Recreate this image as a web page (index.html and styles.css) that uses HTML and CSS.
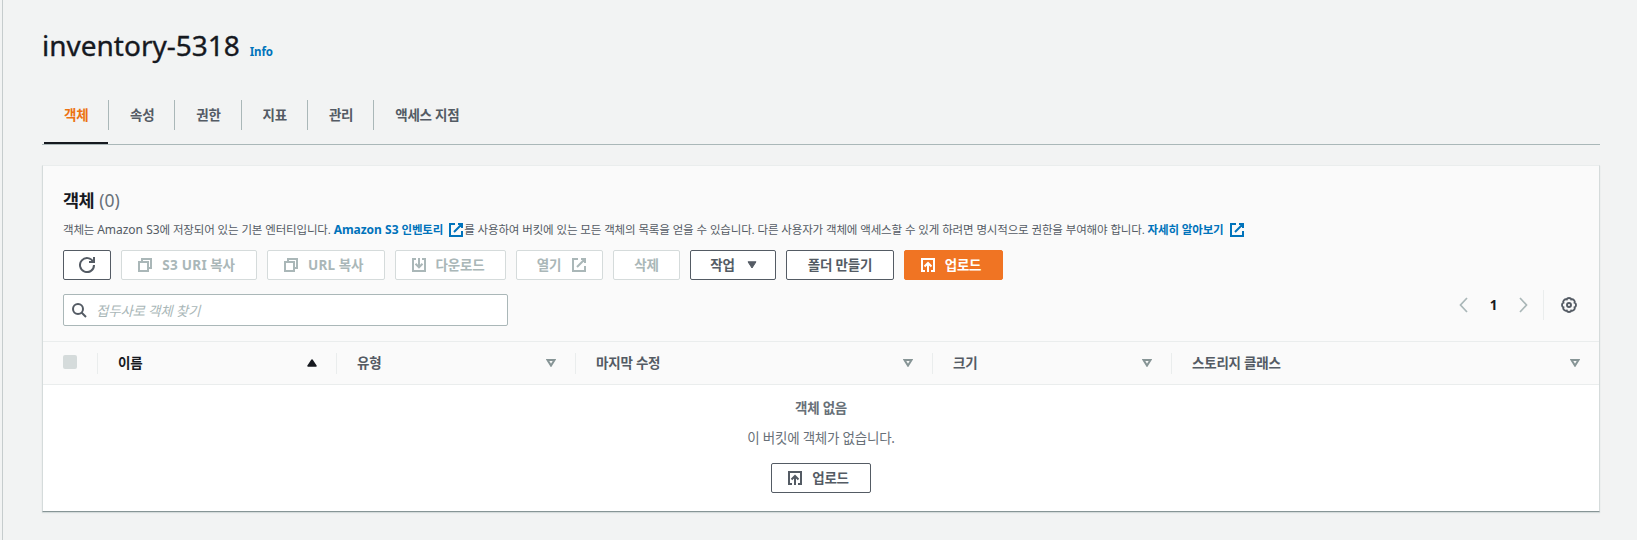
FILE: index.html
```html
<!DOCTYPE html>
<html lang="ko">
<head>
<meta charset="utf-8">
<title>inventory-5318</title>
<link rel="stylesheet" href="styles.css">
</head>
<body>
<svg class="defs" aria-hidden="true">
  <symbol id="copy" viewBox="0 0 16 16"><path d="M2 5h9v9H2zM5 5V2h9v9h-3"/></symbol>
  <symbol id="download" viewBox="0 0 16 16"><path d="M5 2H2v12h12V2h-3M8 1v9M4.5 6.8 8 10.3l3.5-3.5"/></symbol>
  <symbol id="upload" viewBox="0 0 16 16"><path d="M5 14H2V2h12v12h-3M8 15V6M4.5 9.5 8 6l3.5 3.5"/></symbol>
  <symbol id="external" viewBox="0 0 16 16"><path d="M10 2h4v4M6 10l8-8M14 9v5H2V2h5"/></symbol>
  <symbol id="sort" viewBox="0 0 10 8"><path d="M1.5 1h7L5 6.6z"/></symbol>
</svg>
<main class="page">
  <header class="heading"><h1>inventory-5318</h1><a class="info">Info</a></header>
  <nav class="tabs">
    <a class="tab active"><span>객체</span></a><a class="tab"><span>속성</span></a><a class="tab"><span>권한</span></a><a class="tab"><span>지표</span></a><a class="tab"><span>관리</span></a><a class="tab"><span>액세스 지점</span></a>
  </nav>
  <section class="panel">
    <div class="panel-head">
      <h2>객체 <span class="count">(0)</span></h2>
      <p class="desc">객체는 <span class="latin">Amazon S3</span>에 저장되어 있는 기본 엔터티입니다. <a><span class="latin">Amazon S3</span> 인벤토리 <svg class="icon"><use href="#external"/></svg></a>를 사용하여 버킷에 있는 모든 객체의 목록을 얻을 수 있습니다. 다른 사용자가 객체에 액세스할 수 있게 하려면 명시적으로 권한을 부여해야 합니다. <a class="more">자세히 알아보기 <svg class="icon"><use href="#external"/></svg></a></p>
      <div class="actions">
        <button class="btn refresh"><svg class="icon" viewBox="0 0 16 16"><path d="M10 5h5V0M15 8a7 7 0 1 1-.7-3"/></svg></button>
        <button class="btn off leading w-uri"><svg class="icon"><use href="#copy"/></svg><span><span class="latin">S3 URI</span> 복사</span></button>
        <button class="btn off leading w-url"><svg class="icon"><use href="#copy"/></svg><span><span class="latin">URL</span> 복사</span></button>
        <button class="btn off leading w-down"><svg class="icon"><use href="#download"/></svg><span>다운로드</span></button>
        <button class="btn off w-open trailing"><span>열기</span><svg class="icon"><use href="#external"/></svg></button>
        <button class="btn off w-del"><span>삭제</span></button>
        <button class="btn w-act"><span>작업</span><svg class="caret" viewBox="0 0 10 8"><path d="M1 .8h8L5 7z"/></svg></button>
        <button class="btn w-folder"><span>폴더 만들기</span></button>
        <button class="btn leading primary"><svg class="icon"><use href="#upload"/></svg><span>업로드</span></button>
      </div>
      <div class="tools">
        <div class="search"><svg class="icon" viewBox="0 0 16 16"><circle cx="7" cy="7" r="5"/><path d="m15 15-4.5-4.5"/></svg><span>접두사로 객체 찾기</span></div>
        <div class="pager">
          <svg class="arrow" viewBox="0 0 9 16"><path d="M8 1 1.5 8 8 15"/></svg>
          <b>1</b>
          <svg class="arrow" viewBox="0 0 9 16"><path d="m1 1 6.5 7L1 15"/></svg>
          <i class="rule"></i>
          <svg class="gear" viewBox="0 0 16 16"><path d="M5.7 2.4Q6.2 1 8 1T10.3 2.4Q11.7 1.8 12.95 3.05T13.6 5.7Q15 6.2 15 8T13.6 10.3Q14.2 11.7 12.95 12.95T10.3 13.6Q9.8 15 8 15T5.7 13.6Q4.3 14.2 3.05 12.95T2.4 10.3Q1 9.8 1 8T2.4 5.7Q1.8 4.3 3.05 3.05T5.7 2.4z"/><circle cx="8" cy="8" r="2"/></svg>
        </div>
      </div>
    </div>
    <div class="columns">
      <div class="check"><i></i></div>
      <div class="col sorted"><span>이름</span><svg class="sort" viewBox="0 0 10 8"><path d="M1 7h8L5 1z"/></svg></div>
      <div class="col"><span>유형</span><svg class="sort"><use href="#sort"/></svg></div>
      <div class="col"><span>마지막 수정</span><svg class="sort"><use href="#sort"/></svg></div>
      <div class="col"><span>크기</span><svg class="sort"><use href="#sort"/></svg></div>
      <div class="col"><span>스토리지 클래스</span><svg class="sort"><use href="#sort"/></svg></div>
    </div>
    <div class="empty">
      <b>객체 없음</b>
      <p>이 버킷에 객체가 없습니다.</p>
      <button class="btn leading w-upload"><svg class="icon"><use href="#upload"/></svg><span>업로드</span></button>
    </div>
  </section>
</main>
</body>
</html>
```
FILE: styles.css
```css
* { box-sizing: border-box; }
body {
  margin: 0;
  height: 540px;
  overflow: hidden;
  background: #f2f3f3;
  color: #545b64;
  font: 13.5px/20px "Noto Sans", "Noto Sans CJK KR", sans-serif;
  letter-spacing: -0.22px;
  white-space: nowrap;
}
h1, h2, p { margin: 0; }
svg { display: block; fill: none; stroke: currentColor; stroke-width: 2; flex: none; }
.defs { position: absolute; width: 0; height: 0; }
.icon { width: 16px; height: 16px; }
.latin { letter-spacing: 0; }
.page { height: 540px; margin-left: 2px; padding: 25px 37px 0 39px; border-left: 1px solid #c6cccd; }
.heading { display: flex; align-items: baseline; gap: 10px; height: 75px; }
h1 { color: #16191f; font-size: 28px; line-height: 40px; font-weight: 400; letter-spacing: 0; -webkit-text-stroke: 0.35px; }
.info { color: #0073bb; font-size: 11.5px; font-weight: 700; letter-spacing: -0.2px; }

.tabs { display: flex; height: 45px; padding-left: 2px; border-bottom: 1px solid #aab7b8; font-weight: 700; }
.tab { height: 44px; width: 66.3px; }
.tab span { display: block; height: 30px; padding-left: 21px; line-height: 30px; border-right: 1px solid #aab7b8; }
.tab:last-child span { border: 0; }
.active { width: 65px; color: #ec7211; background: linear-gradient(#16191f, #16191f) 0 100% / 64px 2px no-repeat; }
.active span { padding-left: 20px; }

.panel {
  width: 1558px; height: 347px; margin-top: 20px;
  border: 1px solid #d5dbdb; border-top-color: #eaeded; border-bottom-color: #879596;
  background: #fff; box-shadow: 0 1px 1px #d5dbdb;
}
.panel-head { height: 175px; padding: 22px 20px 0; background: #fafafa; }
h2 { color: #16191f; font-size: 17.5px; line-height: 24px; letter-spacing: -0.5px; word-spacing: 1px; }
.count { color: #687078; font-weight: 400; letter-spacing: 0; }
.desc { height: 38px; padding-top: 8px; font-size: 11.5px; line-height: 20px; letter-spacing: -0.17px; word-spacing: 0.2px; }
.desc .latin { font-size: 12px; letter-spacing: -0.05px; }
.desc a { color: #0073bb; font-weight: 700; }
.desc .icon { display: inline-block; vertical-align: -4px; margin-left: 2px; }
.actions { display: flex; gap: 10px; }
.btn {
  display: flex; align-items: center; justify-content: center; gap: 9px;
  height: 30px; padding: 0; border: 1px solid #545b64; border-radius: 2px;
  background: #fff; color: #545b64; font: inherit; font-weight: 700; letter-spacing: inherit;
}
.btn .latin { letter-spacing: 0.3px; }
.off { border-color: #d5dbdb; color: #aab7b8; }
.leading { padding-right: 6px; }
.primary { width: 99px; border-color: #f07423; background: #f07423; color: #fff; }
.refresh { width: 48px; }
.w-uri { width: 136px; }
.w-url { width: 118px; }
.w-down { width: 111px; }
.w-open { width: 87px; }
.w-del { width: 67px; }
.w-act { width: 86px; gap: 12px; padding-left: 1px; }
.w-folder { width: 108px; }
.w-upload { width: 100px; }
.trailing { gap: 10px; padding-left: 5px; }
.caret { width: 10px; height: 8px; fill: currentColor; stroke-width: 1; }
.tools { display: flex; justify-content: space-between; margin-top: 14px; }
.search {
  display: flex; align-items: center; gap: 9px; width: 445px; height: 32px; padding-left: 7px;
  border: 1px solid #aab7b8; border-radius: 2px; background: #fff; color: #aab7b8; font-style: italic;
}
.search .icon { color: #545b64; }
.search span { padding-top: 1px; }
.pager { display: flex; align-items: center; height: 30px; margin-top: -4px; margin-right: 2px; }
.arrow { width: 9px; height: 16px; color: #aab7b8; stroke-width: 1.7; }
.pager b { width: 51px; text-align: center; color: #16191f; }
.rule { width: 1px; height: 30px; margin: 0 17px 0 15px; background: #eaeded; }
.gear { width: 16px; height: 16px; stroke-width: 1.9; }

.columns {
  display: grid; grid-template-columns: 54px 239px 239px 357px 239px 1fr; align-items: center;
  height: 44px; border: solid #eaeded; border-width: 1px 0; background: #fafafa; font-weight: 700;
}
.check i { display: block; width: 14px; height: 14px; margin: 0 0 2px 20px; border-radius: 2px; background: #d5dbdb; }
.col { display: flex; align-items: center; justify-content: space-between; height: 21px; padding: 0 19px 0 20px; border-left: 1px solid #eaeded; }
.sort { width: 10px; height: 8px; color: #879596; stroke-width: 2; }
.sorted { color: #16191f; }
.sorted .sort { color: #16191f; fill: currentColor; stroke-width: 1.5; stroke-linejoin: round; }
.empty { display: flex; flex-direction: column; align-items: center; padding-top: 13px; color: #687078; }
.empty p { margin: 10px 0 15px; }
```
